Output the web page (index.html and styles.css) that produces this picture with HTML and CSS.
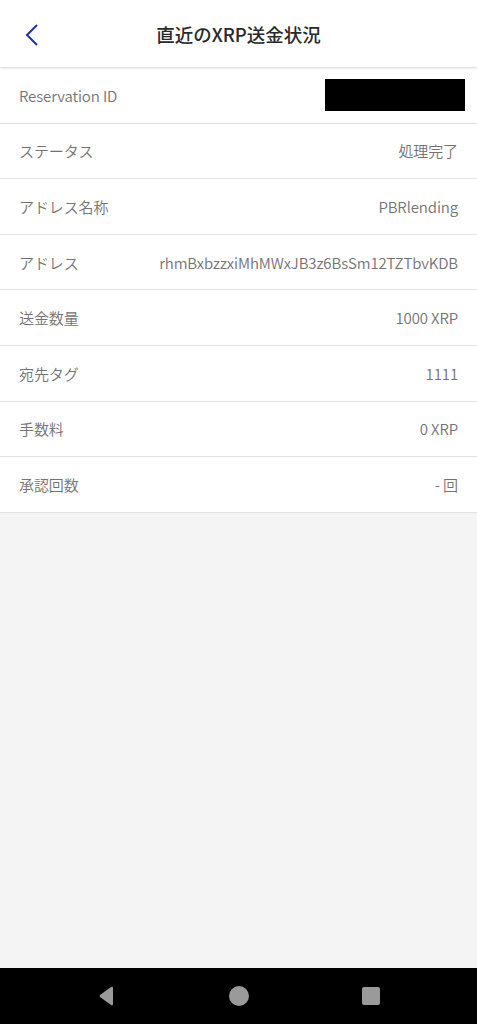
FILE: index.html
```html
<!DOCTYPE html>
<html>
<head>
    <title>直近のXRP送金状況</title>
    <link rel="stylesheet" href="styles.css">
</head>
<body>
    <div class="screen">
        <div class="header">
            <a class="back" href="#">
                <svg width="14" height="24" viewBox="0 0 14 24">
                    <polyline points="12,2 2,12 12,22" fill="none" stroke="#1f33a6" stroke-width="2"/>
                </svg>
            </a>
            <h1>直近のXRP送金状況</h1>
        </div>
        <div class="content">
            <div class="row">
                <span class="label">Reservation ID</span>
                <span class="masked"></span>
            </div>
            <div class="row">
                <span class="label">ステータス</span>
                <span class="value">処理完了</span>
            </div>
            <div class="row">
                <span class="label">アドレス名称</span>
                <span class="value">PBRlending</span>
            </div>
            <div class="row">
                <span class="label">アドレス</span>
                <span class="value">rhmBxbzzxiMhMWxJB3z6BsSm12TZTbvKDB</span>
            </div>
            <div class="row">
                <span class="label">送金数量</span>
                <span class="value">1000 XRP</span>
            </div>
            <div class="row">
                <span class="label">宛先タグ</span>
                <span class="value">1111</span>
            </div>
            <div class="row">
                <span class="label">手数料</span>
                <span class="value">0 XRP</span>
            </div>
            <div class="row">
                <span class="label">承認回数</span>
                <span class="value">- 回</span>
            </div>
        </div>
        <div class="navbar">
            <svg width="20" height="20" viewBox="0 0 20 20">
                <path d="M16 2 L16 18 Q16 20 14 19 L3 11 Q2 10 3 9 L14 1 Q16 0 16 2 Z" fill="#9a9a9a"/>
            </svg>
            <svg width="20" height="20" viewBox="0 0 20 20">
                <circle cx="10" cy="10" r="10" fill="#9a9a9a"/>
            </svg>
            <svg width="20" height="20" viewBox="0 0 20 20">
                <rect x="1" y="1" width="18" height="18" rx="2" fill="#9a9a9a"/>
            </svg>
        </div>
    </div>
</body>
</html>
```

FILE: styles.css
```css
body {
    margin: 0;
    font-family: "Noto Sans CJK JP", sans-serif;
    background-color: #f4f4f4;
}

.screen {
    display: flex;
    flex-direction: column;
    height: 100vh;
}

.header {
    position: relative;
    height: 67px;
    display: flex;
    align-items: center;
    justify-content: center;
    background-color: white;
    box-shadow: 0 1px 3px rgba(0, 0, 0, 0.12);
    z-index: 1;
}

.back {
    position: absolute;
    left: 25px;
    top: 23px;
    display: block;
    height: 24px;
}

h1 {
    margin: 0;
    font-size: 18.5px;
    font-weight: 500;
    color: #2a2a2a;
}

.content {
    flex: 1;
    padding-top: 1px;
}

.row {
    display: flex;
    justify-content: space-between;
    align-items: center;
    height: 55.6px;
    box-sizing: border-box;
    padding: 0 19px;
    background-color: white;
    border-bottom: 1.5px solid #e2e2e2;
    letter-spacing: -0.12px;
}

.label {
    font-size: 15px;
    font-weight: 350;
    color: #737373;
}

.value {
    font-size: 15px;
    font-weight: 350;
    color: #737373;
}

.masked {
    width: 140px;
    height: 32px;
    margin-right: -7px;
    background-color: black;
}

.navbar {
    height: 56px;
    background-color: black;
    display: flex;
    align-items: center;
    justify-content: space-between;
    padding: 0 96px 0 97px;
}
```
